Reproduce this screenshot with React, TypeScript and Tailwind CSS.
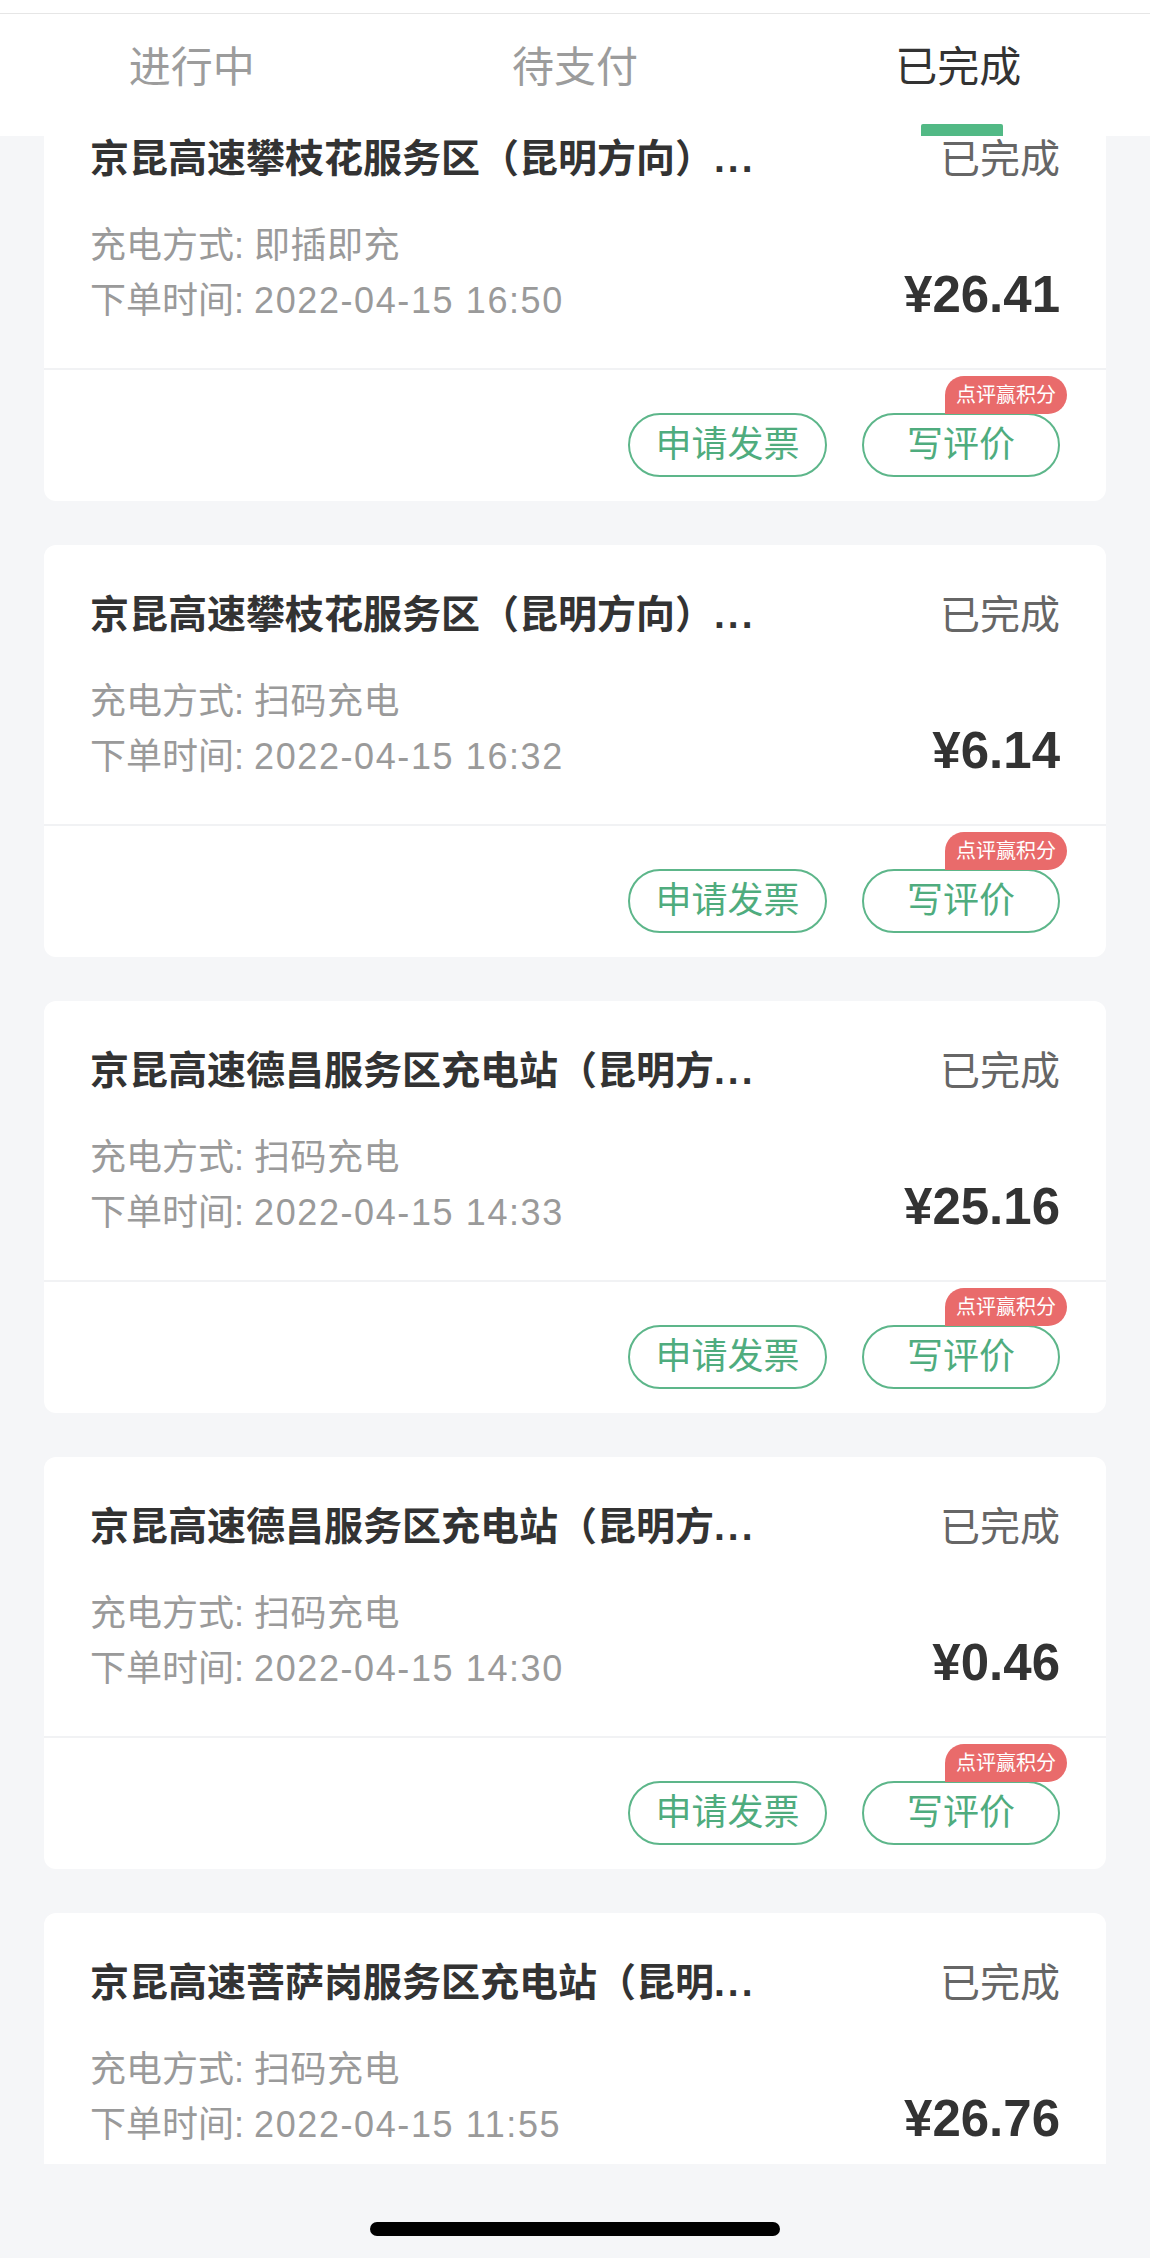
// Completed orders list (charging station orders)
const font = "font-['Liberation_Sans','Noto_Sans_CJK_SC',sans-serif]"

interface Order {
  title: string
  mode: string
  time: string
  price: string
}

const orders: Order[] = [
  { title: "京昆高速攀枝花服务区（昆明方向）", mode: "即插即充", time: "2022-04-15 16:50", price: "26.41" },
  { title: "京昆高速攀枝花服务区（昆明方向）", mode: "扫码充电", time: "2022-04-15 16:32", price: "6.14" },
  { title: "京昆高速德昌服务区充电站（昆明方", mode: "扫码充电", time: "2022-04-15 14:33", price: "25.16" },
  { title: "京昆高速德昌服务区充电站（昆明方", mode: "扫码充电", time: "2022-04-15 14:30", price: "0.46" },
  { title: "京昆高速菩萨岗服务区充电站（昆明", mode: "扫码充电", time: "2022-04-15 11:55", price: "26.76" },
]

const tabs = ["进行中", "待支付", "已完成"]

function OrderCard({ order }: { order: Order }) {
  return (
    <div className="bg-white rounded-[12px] flex flex-col shrink-0">
      {/* Top info */}
      <div className="px-[46px] pt-[46px] pb-[40px]">
        <div className="flex items-center justify-between h-[48px]">
          <span className="text-[39px] leading-[48px] font-bold text-[#333333] whitespace-nowrap">
            {order.title}
            <span className="tracking-[3px]">...</span>
          </span>
          <span className="text-[40px] leading-[48px] text-[#666666] whitespace-nowrap">已完成</span>
        </div>
        <div className="flex items-end justify-between mt-[35px]">
          <div className="text-[36px] leading-[55px] text-[#9a9a9a] whitespace-nowrap">
            <div>
              充电方式:&nbsp;<span className="tracking-[0.5px]">{order.mode}</span>
            </div>
            <div>
              下单时间: <span className="tracking-[1.6px]">{order.time}</span>
            </div>
          </div>
          <div className="text-[51px] leading-[50px] font-bold text-[#333333] mb-[8px]">¥{order.price}</div>
        </div>
      </div>

      {/* Divider */}
      <div className="h-[2px] bg-[#f1f2f4]" />

      {/* Actions */}
      <div className="flex justify-end gap-[35px] pr-[46px] pt-[43px] pb-[24px]">
        <button className="w-[199px] h-[64px] rounded-full border-2 border-[#5db68a] text-[#4fac7e] text-[36px] flex items-center justify-center">
          申请发票
        </button>
        <div className="relative">
          <button className="w-[198px] h-[64px] rounded-full border-2 border-[#5db68a] text-[#4fac7e] text-[36px] flex items-center justify-center">
            写评价
          </button>
          <span className="absolute -top-[37px] -right-[7px] h-[38px] w-[122px] flex items-center justify-center rounded-t-[19px] rounded-br-[19px] bg-[#e96b6b] text-white text-[20px] leading-none">
            点评赢积分
          </span>
        </div>
      </div>
    </div>
  )
}

export default function App() {
  return (
    <div className={`w-[1150px] h-[2258px] bg-[#f5f6f8] flex flex-col overflow-hidden ${font}`}>
      {/* Header with tabs */}
      <div className="h-[136px] bg-white flex flex-col shrink-0">
        <div className="h-[14px] border-b border-[#e6e6e6]" />
        <div className="flex-1 grid grid-cols-3">
          {tabs.map((tab, i) => (
            <div key={tab} className="flex flex-col items-center pt-[33px]">
              <span className={`text-[42px] leading-[42px] ${i === 2 ? "text-[#333333]" : "text-[#9c9c9c]"}`}>{tab}</span>
              {i === 2 && <div className="mt-auto ml-[8px] w-[82px] h-[12px] rounded-t-[2px] bg-[#52b985]" />}
            </div>
          ))}
        </div>
      </div>

      {/* Scrolled list, first card partly under the header */}
      <div className="h-[2028px] overflow-hidden shrink-0">
        <div className="-mt-[47px] px-[44px] flex flex-col gap-[44px]">
          {orders.map((order, i) => (
            <OrderCard key={i} order={order} />
          ))}
        </div>
      </div>

      {/* Home indicator area */}
      <div className="flex-1 flex justify-center pt-[58px]">
        <div className="w-[410px] h-[14px] rounded-full bg-black" />
      </div>
    </div>
  )
}
